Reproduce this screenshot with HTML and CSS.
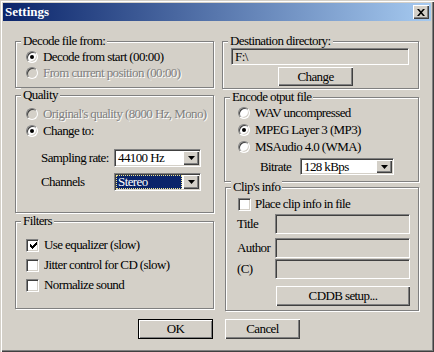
FILE: index.html
```html
<!DOCTYPE html>
<html lang="en">
<head>
  <meta charset="UTF-8" />
  <title>Settings</title>
  <link rel="stylesheet" href="styles.css">
</head>
<body>
  <div class="window">
    <div class="titlebar">
      <span class="title">Settings</span>
      <span class="close">
        <svg width="8" height="7" viewBox="0 0 8 7"><path d="M0 0h2l2 2.3 2-2.3h2l-3 3.5 3 3.5h-2l-2-2.3-2 2.3h-2l3-3.5z" fill="#000"/></svg>
      </span>
    </div>

    <div class="content">
      <div class="columns">
        <div class="col col-left">
          <fieldset class="group g-decode">
            <legend>Decode file from:</legend>
            <div class="opt"><span class="radio checked"></span>Decode from start (00:00)</div>
            <div class="opt disabled"><span class="radio"></span>From current position (00:00)</div>
          </fieldset>

          <fieldset class="group g-quality">
            <legend>Quality</legend>
            <div class="opt tall disabled"><span class="radio"></span>Original's quality (8000 Hz, Mono)</div>
            <div class="opt tall"><span class="radio checked"></span>Change to:</div>
            <div class="field-row first">
              <span class="field-label">Sampling rate:</span>
              <div class="select s-rate"><span class="value">44100 Hz</span><span class="arrow"><svg width="7" height="4" viewBox="0 0 7 4"><path d="M0 0h7l-3.5 4z" fill="#000"/></svg></span></div>
            </div>
            <div class="field-row second">
              <span class="field-label">Channels</span>
              <div class="select s-rate"><span class="value selected">Stereo</span><span class="arrow"><svg width="7" height="4" viewBox="0 0 7 4"><path d="M0 0h7l-3.5 4z" fill="#000"/></svg></span></div>
            </div>
          </fieldset>

          <fieldset class="group g-filters">
            <legend>Filters</legend>
            <div class="check-row"><span class="check checked"><svg width="7" height="7" viewBox="0 0 7 7"><path d="M6 0h1v1h-1z M5 1h2v1h-2z M0 2h1v1h-1z M4 2h3v1h-3z M0 3h2v1h-2z M3 3h3v1h-3z M0 4h5v1h-5z M1 5h3v1h-3z M2 6h1v1h-1z" fill="#000"/></svg></span>Use equalizer (slow)</div>
            <div class="check-row"><span class="check"></span>Jitter control for CD (slow)</div>
            <div class="check-row"><span class="check"></span>Normalize sound</div>
          </fieldset>
        </div>

        <div class="col col-right">
          <fieldset class="group g-dest">
            <legend>Destination directory:</legend>
            <div class="textbox dest-path">F:\</div>
            <div class="button change-btn">Change</div>
          </fieldset>

          <fieldset class="group g-encode">
            <legend>Encode otput file</legend>
            <div class="opt enc"><span class="radio"></span>WAV uncompressed</div>
            <div class="opt enc"><span class="radio checked"></span>MPEG Layer 3 (MP3)</div>
            <div class="opt enc"><span class="radio"></span>MSAudio 4.0 (WMA)</div>
            <div class="field-row bitrate-row">
              <span class="field-label bitrate-label">Bitrate</span>
              <div class="select s-bitrate"><span class="value">128 kBps</span><span class="arrow"><svg width="7" height="4" viewBox="0 0 7 4"><path d="M0 0h7l-3.5 4z" fill="#000"/></svg></span></div>
            </div>
          </fieldset>

          <fieldset class="group g-clip">
            <legend>Clip's info</legend>
            <div class="check-row clip-check"><span class="check"></span>Place clip info in file</div>
            <div class="info-row r-title"><span class="info-label">Title</span><div class="textbox info-box"></div></div>
            <div class="info-row r-author"><span class="info-label">Author</span><div class="textbox info-box"></div></div>
            <div class="info-row r-copy"><span class="info-label">(C)</span><div class="textbox info-box"></div></div>
            <div class="button cddb-btn">CDDB setup...</div>
          </fieldset>
        </div>
      </div>

      <div class="actions">
        <div class="button default">OK</div>
        <div class="button">Cancel</div>
      </div>
    </div>
  </div>
</body>
</html>
```

FILE: styles.css
```css
:root {
  --face: #d4d0c8;
  --shadow: #808080;
  --dark: #404040;
  --hilite: #ffffff;
  --navy: #0a246a;
}

* {
  box-sizing: border-box;
}

body {
  margin: 0;
  background: var(--face);
}

.window {
  width: 434px;
  height: 352px;
  padding-top: 3px;
  background: var(--face);
  color: #000;
  font: 13px "Liberation Serif", "Times New Roman", serif;
  letter-spacing: -0.6px;
  box-shadow: inset 1px 1px var(--face), inset 2px 2px var(--hilite),
              inset -1px -1px var(--dark), inset -2px -2px var(--shadow);
}

/* title bar */
.titlebar {
  margin: 0 3px;
  height: 18px;
  padding: 0 2px;
  display: flex;
  align-items: center;
  justify-content: space-between;
  background: linear-gradient(to right, var(--navy), #a6caf0);
}

.title {
  color: #fff;
  font-weight: bold;
  letter-spacing: 0;
}

.close {
  width: 16px;
  height: 14px;
  display: flex;
  align-items: center;
  justify-content: center;
  background: var(--face);
  box-shadow: inset 1px 1px var(--hilite), inset -1px -1px var(--dark), inset -2px -2px var(--shadow);
}

.close svg {
  display: block;
}

/* layout */
.content {
  padding: 13px 0 0 15px;
}

.columns {
  display: flex;
  align-items: flex-start;
  gap: 8px;
  height: 277px;
}

.col-left {
  width: 199px;
}

.col-right {
  width: 197px;
}

/* group boxes */
.group {
  margin: 0;
  padding: 0;
  min-width: 0;
  border: 1px solid var(--shadow);
  box-shadow: inset 1px 1px var(--hilite), 1px 1px var(--hilite);
}

.group legend {
  margin-left: 5px;
  padding: 0 2px;
  line-height: 14px;
  background: var(--face);
}

.g-decode { height: 54px; padding-top: 1px; }
.g-quality { height: 125px; padding-top: 3px; }
.g-filters { height: 95px; margin-top: 1px; padding-top: 7px; }

.g-dest { height: 55px; }
.g-encode { height: 92px; margin-top: 1px; margin-left: 2px; }
.g-clip { height: 131px; margin-top: -2px; margin-left: 3px; padding-top: 2px; }

/* radio options */
.opt {
  display: flex;
  align-items: center;
  height: 16px;
  padding-left: 10px;
  white-space: nowrap;
}

.opt.tall,
.opt.enc {
  height: 17px;
}

.opt.enc {
  padding-left: 13px;
}

.radio {
  position: relative;
  flex: none;
  width: 12px;
  height: 12px;
  margin-right: 5px;
  border-radius: 50%;
  border: 1px solid;
  border-color: var(--shadow) var(--hilite) var(--hilite) var(--shadow);
  background: #fff;
  box-shadow: inset 1px 1px var(--dark), inset -1px -1px var(--face);
}

.radio.checked::after {
  content: "";
  position: absolute;
  left: 3px;
  top: 3px;
  width: 4px;
  height: 4px;
  border-radius: 50%;
  background: #000;
}

.disabled {
  color: var(--shadow);
  text-shadow: 1px 1px #fff;
}

.disabled .radio {
  background: var(--face);
}

/* checkboxes */
.check-row {
  display: flex;
  align-items: center;
  height: 20px;
  padding-left: 10px;
  white-space: nowrap;
}

.check {
  flex: none;
  width: 13px;
  height: 13px;
  margin-right: 5px;
  display: flex;
  align-items: center;
  justify-content: center;
  border: 1px solid;
  border-color: var(--shadow) var(--hilite) var(--hilite) var(--shadow);
  background: #fff;
  box-shadow: inset 1px 1px var(--dark), inset -1px -1px var(--face);
}

.check svg {
  display: block;
  margin: 1px 0 0 1px;
}

.clip-check {
  height: 16px;
  padding-left: 12px;
}

.clip-check .check {
  margin-right: 4px;
}

/* label + dropdown rows */
.field-row {
  display: flex;
  align-items: center;
  padding-left: 25px;
}

.field-row.first { margin-top: 10px; }
.field-row.second { margin-top: 6px; }

.field-label {
  width: 73px;
  flex: none;
}

.bitrate-row {
  margin-top: 3px;
  padding-left: 35px;
}

.bitrate-label {
  width: 40px;
}

.select {
  display: flex;
  padding: 1px;
  background: #fff;
  border: 1px solid;
  border-color: var(--shadow) var(--hilite) var(--hilite) var(--shadow);
  box-shadow: inset 1px 1px var(--dark), inset -1px -1px var(--face);
}

.s-rate {
  width: 87px;
  height: 18px;
}

.s-bitrate {
  width: 94px;
  height: 17px;
}

.select .value {
  flex: 1;
  padding-left: 2px;
  line-height: 14px;
  white-space: nowrap;
}

.select .value.selected {
  margin-right: 1px;
  background: var(--navy);
  color: #fff;
  outline: 1px dotted #f0e68c;
  outline-offset: -1px;
}

.select .arrow {
  flex: none;
  width: 16px;
  display: flex;
  align-items: center;
  justify-content: center;
  background: var(--face);
  box-shadow: inset 1px 1px var(--hilite), inset -1px -1px var(--dark), inset -2px -2px var(--shadow);
}

.select .arrow svg {
  display: block;
}

/* text fields */
.textbox {
  background: var(--face);
  border: 1px solid;
  border-color: var(--shadow) var(--hilite) var(--hilite) var(--shadow);
  box-shadow: inset 1px 1px var(--dark), inset -1px -1px var(--face);
}

.dest-path {
  width: 178px;
  height: 17px;
  margin-left: 8px;
  padding-left: 3px;
  line-height: 15px;
}

.info-row {
  display: flex;
  align-items: center;
  height: 20px;
  padding-left: 11px;
}

.r-title { margin-top: 2px; }
.r-author { margin-top: 4px; }
.r-copy { margin-top: 1px; }

.info-label {
  width: 38px;
  flex: none;
}

.info-box {
  width: 135px;
  height: 20px;
}

/* push buttons */
.button {
  width: 75px;
  height: 20px;
  display: flex;
  align-items: center;
  justify-content: center;
  background: var(--face);
  box-shadow: inset 1px 1px var(--hilite), inset -1px -1px var(--dark), inset -2px -2px var(--shadow);
}

.button.default {
  border: 1px solid #000;
  box-shadow: inset 1px 1px var(--hilite), inset -1px -1px var(--shadow);
}

.change-btn {
  height: 19px;
  margin: 2px 0 0 55px;
}

.cddb-btn {
  width: 134px;
  margin: 7px 0 0 50px;
}

.actions {
  display: flex;
  gap: 12px;
  margin-top: 8px;
  padding-left: 123px;
}
```
